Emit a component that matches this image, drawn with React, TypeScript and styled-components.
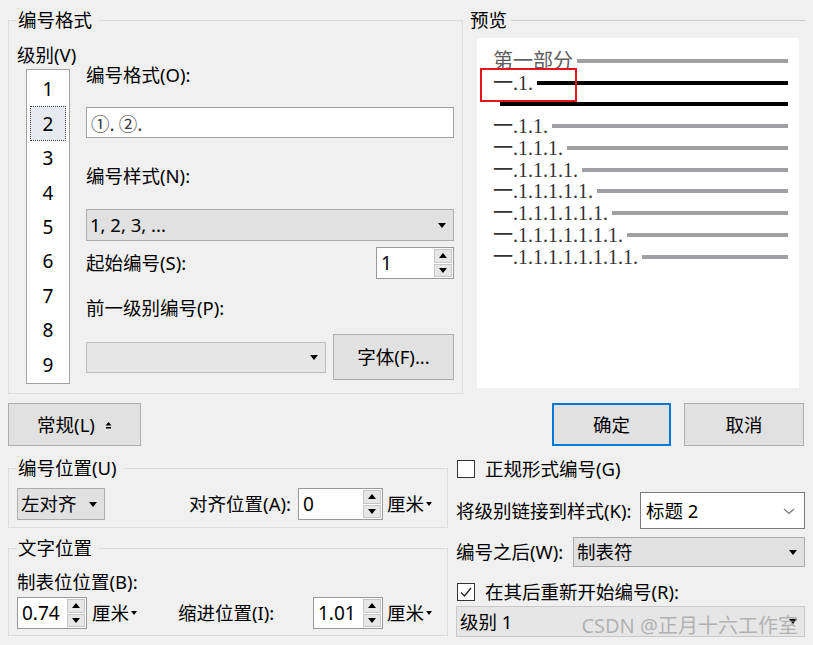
import React from "react";
import styled, { createGlobalStyle } from "styled-components";

const Global = createGlobalStyle`
  html, body { margin: 0; padding: 0; background: #f0f0f0; }
  body {
    font-family: "Noto Sans", "Noto Sans CJK SC", sans-serif;
    font-size: 18.5px;
    color: #000;
  }
  * { box-sizing: border-box; }
`;

const Dialog = styled.div`
  width: 813px;
  height: 645px;
  overflow: hidden;
  background: #f0f0f0;
  display: flex;
  flex-direction: column;
  line-height: 24px;
`;

const TopRow = styled.div`
  display: flex;
  gap: 7px;
  padding: 8px 0 0 8px;
  height: 394px;
`;

const Group = styled.fieldset<{ $w: number; $h: number }>`
  margin: 0;
  padding: 0 8px;
  min-width: 0;
  width: ${(p) => p.$w}px;
  height: ${(p) => p.$h}px;
  border: 1px solid #dcdcdc;
  flex: none;
`;

const Legend = styled.legend`
  padding: 0 7px 0 1px;
  line-height: 24px;
  font-size: 18.5px;
`;

const FormatGrid = styled.div`
  display: grid;
  grid-template-columns: 69px 368px;
`;

const LevelCol = styled.div`
  padding-top: 11px;
  display: flex;
  flex-direction: column;
`;

const Text = styled.div<{ $mt?: number }>`
  line-height: 24px;
  white-space: nowrap;
  margin-top: ${(p) => p.$mt ?? 0}px;
`;

const ListBox = styled.div`
  margin: 2px 0 0 9px;
  width: 44px;
  height: 315px;
  background: #fff;
  border: 1px solid #a3a3a3;
  padding: 2px 3px 1px 3px;
  display: grid;
  grid-template-rows: repeat(9, 1fr);
`;

const ListItem = styled.div<{ $sel?: boolean }>`
  display: flex;
  align-items: center;
  justify-content: center;
  font-size: 19px;
  background: ${(p) => (p.$sel ? "#e6eaef" : "transparent")};
  border: 1px ${(p) => (p.$sel ? "dotted #444" : "solid transparent")};
`;

const FormCol = styled.div`
  padding-top: 31px;
  display: flex;
  flex-direction: column;
`;

const Input = styled.div<{ $mt?: number }>`
  margin-top: ${(p) => p.$mt ?? 0}px;
  height: 31px;
  background: #fff;
  border: 1px solid #a0a0a0;
  padding-left: 4px;
  display: flex;
  align-items: center;
  color: #3a3a3a;
  font-family: "Noto Sans CJK SC", sans-serif;
`;

const Select = styled.div<{ $w?: number; $h: number; $bg?: string; $bd?: string; $mt?: number }>`
  position: relative;
  margin-top: ${(p) => p.$mt ?? 0}px;
  width: ${(p) => (p.$w ? `${p.$w}px` : "auto")};
  height: ${(p) => p.$h}px;
  background: ${(p) => p.$bg ?? "#e1e1e1"};
  border: 1px solid ${(p) => p.$bd ?? "#adadad"};
  display: flex;
  align-items: center;
  justify-content: space-between;
  padding: 0 7px 0 3px;
  flex: none;
  white-space: nowrap;
`;

const Tri = styled.span<{ $up?: boolean; $w?: number; $h?: number; $c?: string }>`
  display: inline-block;
  width: 0;
  height: 0;
  border-left: ${(p) => (p.$w ?? 10) / 2}px solid transparent;
  border-right: ${(p) => (p.$w ?? 10) / 2}px solid transparent;
  ${(p) =>
    p.$up
      ? `border-bottom: ${p.$h ?? 5}px solid ${p.$c ?? "#000"};`
      : `border-top: ${p.$h ?? 5}px solid ${p.$c ?? "#000"};`}
`;

const Row = styled.div<{ $h: number; $mt?: number }>`
  display: flex;
  align-items: center;
  justify-content: space-between;
  height: ${(p) => p.$h}px;
  margin-top: ${(p) => p.$mt ?? 0}px;
`;

const Spin = styled.div<{ $w: number }>`
  width: ${(p) => p.$w}px;
  height: 32px;
  display: flex;
  background: #fff;
  border: 1px solid #999;
  flex: none;
`;

const SpinValue = styled.div`
  flex: 1;
  padding-left: 4px;
  line-height: 30px;
  font-size: 19px;
`;

const SpinButtons = styled.div`
  width: 19px;
  display: flex;
  flex-direction: column;
  padding: 1px 1px 1px 0;
  gap: 1px;
`;

const SpinBtn = styled.div`
  flex: 1;
  background: #e6e6e6;
  border: 1px solid #c6c6c6;
  display: flex;
  align-items: center;
  justify-content: center;
`;

const Button = styled.div<{ $w: number; $h: number; $primary?: boolean }>`
  width: ${(p) => p.$w}px;
  height: ${(p) => p.$h}px;
  background: #e1e1e1;
  border: ${(p) => (p.$primary ? "2px solid #0078d7" : "1px solid #adadad")};
  display: flex;
  align-items: center;
  justify-content: center;
  gap: 10px;
  flex: none;
  white-space: nowrap;
`;

const PreviewCol = styled.div`
  width: 336px;
  display: flex;
  flex-direction: column;
`;

const PreviewHead = styled.div`
  display: flex;
  align-items: center;
  height: 24px;
  gap: 4px;
`;

const HeadLine = styled.div`
  flex: 1;
  height: 1px;
  background: #cfcfcf;
`;

const PreviewBox = styled.div`
  position: relative;
  margin: 6px 0 0 7px;
  width: 322px;
  height: 350px;
  background: #fff;
  padding: 12px 11px 0 16px;
  font-family: "Liberation Serif", "Noto Sans CJK SC", serif;
  font-size: 20px;
  color: #3a3a3a;
`;

const PRow = styled.div`
  display: flex;
  align-items: center;
  height: 21.75px;
  line-height: 22px;
  white-space: nowrap;
`;

const PText = styled.span<{ $muted?: boolean }>`
  color: ${(p) => (p.$muted ? "#606060" : "#333")};
`;

const Bar = styled.div<{ $dark?: boolean; $ml?: number }>`
  flex: 1;
  height: 4px;
  margin-left: ${(p) => p.$ml ?? 4}px;
  background: ${(p) => (p.$dark ? "#000" : "#a0a0a4")};
`;

const Highlight = styled.div`
  position: absolute;
  left: 3px;
  top: 30px;
  width: 97px;
  height: 34px;
  border: 2px solid #e8141c;
`;

const ButtonRow = styled.div`
  display: flex;
  align-items: center;
  gap: 13px;
  padding: 0 9px 0 8px;
  margin-top: 9px;
`;

const Spacer = styled.div`
  flex: 1;
`;

const BottomRow = styled.div`
  display: flex;
  margin-top: 10px;
  padding-left: 8px;
  gap: 8px;
`;

const LeftCol = styled.div`
  display: flex;
  flex-direction: column;
  gap: 8px;
`;

const PosGrid = styled.div`
  display: grid;
  grid-template-columns: 88px 193px 85px 63px;
  align-items: center;
  height: 32px;
  margin-top: 8px;
`;

const TextGrid = styled.div`
  display: grid;
  grid-template-columns: 70px 91px 135px 70px 63px;
  align-items: center;
  height: 32px;
  margin-top: 3px;
`;

const RightLabel = styled.div`
  justify-self: end;
  padding-right: 7px;
  white-space: nowrap;
`;

const Unit = styled.div<{ $pl: number }>`
  display: flex;
  align-items: center;
  gap: 2px;
  padding-left: ${(p) => p.$pl}px;
  white-space: nowrap;
`;

const RightCol = styled.div`
  width: 349px;
  display: flex;
  flex-direction: column;
  padding-top: 1px;
`;

const CheckRow = styled.div<{ $mt?: number }>`
  display: flex;
  align-items: center;
  gap: 10px;
  height: 24px;
  margin-top: ${(p) => p.$mt ?? 0}px;
  padding-left: 1px;
  white-space: nowrap;
`;

const Box = styled.div`
  width: 18px;
  height: 18px;
  border: 1px solid #333;
  background: #fff;
  display: flex;
  align-items: center;
  justify-content: center;
`;

const FieldRow = styled.div<{ $h: number; $mt: number }>`
  display: flex;
  align-items: center;
  justify-content: space-between;
  height: ${(p) => p.$h}px;
  margin-top: ${(p) => p.$mt}px;
  white-space: nowrap;
`;

const Combo = styled.div`
  width: 165px;
  height: 37px;
  background: #fff;
  border: 1px solid #7a7a7a;
  display: flex;
  align-items: center;
  justify-content: space-between;
  padding: 0 8px 0 5px;
`;

const Watermark = styled.div`
  position: absolute;
  right: 6px;
  top: 7px;
  font-size: 20px;
  line-height: 24px;
  color: rgba(160, 160, 160, 0.75);
  font-family: "Noto Sans", "Noto Sans CJK SC", sans-serif;
  white-space: nowrap;
  pointer-events: none;
`;

const Arrow = () => <Tri $w={9} $h={5} />;

const Spinner = ({ w, value }: { w: number; value: string }) => (
  <Spin $w={w}>
    <SpinValue>{value}</SpinValue>
    <SpinButtons>
      <SpinBtn>
        <Tri $up $w={9} $h={5} />
      </SpinBtn>
      <SpinBtn>
        <Tri $w={9} $h={5} />
      </SpinBtn>
    </SpinButtons>
  </Spin>
);

const CmUnit = ({ pl }: { pl: number }) => (
  <Unit $pl={pl}>
    厘米
    <Tri $w={7} $h={4} />
  </Unit>
);

const CollapseGlyph = () => (
  <svg width="7" height="8" viewBox="0 0 7 8">
    <polygon points="0.5,4.5 3.5,1 6.5,4.5" fill="#000" />
    <rect x="1" y="6" width="5" height="1.5" fill="#000" />
  </svg>
);

const CheckMark = () => (
  <svg width="14" height="14" viewBox="0 0 14 14">
    <path d="M2 7.5 L5.5 11 L12 3" fill="none" stroke="#222" strokeWidth="1.3" />
  </svg>
);

const Chevron = () => (
  <svg width="14" height="10" viewBox="0 0 14 10">
    <path d="M2 3 L7 7.5 L12 3" fill="none" stroke="#7a7a7a" strokeWidth="1.2" />
  </svg>
);

const levels = [1, 2, 3, 4, 5, 6, 7, 8, 9];
const deeper = [2, 3, 4, 5, 6, 7, 8];

export default function App() {
  return (
    <>
      <Global />
      <Dialog>
        <TopRow>
          <Group $w={455} $h={386}>
            <Legend>编号格式</Legend>
            <FormatGrid>
              <LevelCol>
                <Text>级别(V)</Text>
                <ListBox>
                  {levels.map((n) => (
                    <ListItem key={n} $sel={n === 2}>
                      {n}
                    </ListItem>
                  ))}
                </ListBox>
              </LevelCol>
              <FormCol>
                <Text>编号格式(O):</Text>
                <Input $mt={20}>①. ②.</Input>
                <Text $mt={26}>编号样式(N):</Text>
                <Select $h={32} $mt={21}>
                  <span>1, 2, 3, ...</span>
                  <Arrow />
                </Select>
                <Row $h={32} $mt={6}>
                  <Text>起始编号(S):</Text>
                  <Spinner w={78} value="1" />
                </Row>
                <Text $mt={17}>前一级别编号(P):</Text>
                <Row $h={46} $mt={14}>
                  <Select $w={240} $h={31} $bg="#e6e6e6" $bd="#bdbdbd">
                    <span />
                    <Arrow />
                  </Select>
                  <Button $w={121} $h={46}>
                    字体(F)...
                  </Button>
                </Row>
              </FormCol>
            </FormatGrid>
          </Group>
          <PreviewCol>
            <PreviewHead>
              <span>预览</span>
              <HeadLine />
            </PreviewHead>
            <PreviewBox>
              <PRow>
                <PText $muted>第一部分</PText>
                <Bar />
              </PRow>
              <PRow>
                <PText>一.1.</PText>
                <Bar $dark />
              </PRow>
              <PRow>
                <Bar $dark $ml={7} />
              </PRow>
              {deeper.map((d) => (
                <PRow key={d}>
                  <PText>{"一." + "1.".repeat(d)}</PText>
                  <Bar />
                </PRow>
              ))}
              <Highlight />
            </PreviewBox>
          </PreviewCol>
        </TopRow>

        <ButtonRow>
          <Button $w={133} $h={43}>
            <span>常规(L)</span>
            <CollapseGlyph />
          </Button>
          <Spacer />
          <Button $w={119} $h={43} $primary>
            确定
          </Button>
          <Button $w={120} $h={43}>
            取消
          </Button>
        </ButtonRow>

        <BottomRow>
          <LeftCol>
            <Group $w={440} $h={72}>
              <Legend>编号位置(U)</Legend>
              <PosGrid>
                <Select $w={88} $h={32}>
                  <span>左对齐</span>
                  <Arrow />
                </Select>
                <RightLabel>对齐位置(A):</RightLabel>
                <Spinner w={85} value="0" />
                <CmUnit pl={4} />
              </PosGrid>
            </Group>
            <Group $w={440} $h={100}>
              <Legend>文字位置</Legend>
              <Text $mt={10}>制表位位置(B):</Text>
              <TextGrid>
                <Spinner w={70} value="0.74" />
                <CmUnit pl={5} />
                <Text>缩进位置(I):</Text>
                <Spinner w={70} value="1.01" />
                <CmUnit pl={4} />
              </TextGrid>
            </Group>
          </LeftCol>
          <RightCol>
            <CheckRow>
              <Box />
              <span>正规形式编号(G)</span>
            </CheckRow>
            <FieldRow $h={37} $mt={11}>
              <span>将级别链接到样式(K):</span>
              <Combo>
                <span>标题 2</span>
                <Chevron />
              </Combo>
            </FieldRow>
            <FieldRow $h={30} $mt={8}>
              <span>编号之后(W):</span>
              <Select $w={232} $h={30}>
                <span>制表符</span>
                <Arrow />
              </Select>
            </FieldRow>
            <CheckRow $mt={13}>
              <Box>
                <CheckMark />
              </Box>
              <span>在其后重新开始编号(R):</span>
            </CheckRow>
            <Select $h={31} $mt={2} $bg="#e6e6e6" $bd="#c9c9c9">
              <span>级别 1</span>
              <Arrow />
              <Watermark>CSDN @正月十六工作室</Watermark>
            </Select>
          </RightCol>
        </BottomRow>
      </Dialog>
    </>
  );
}
